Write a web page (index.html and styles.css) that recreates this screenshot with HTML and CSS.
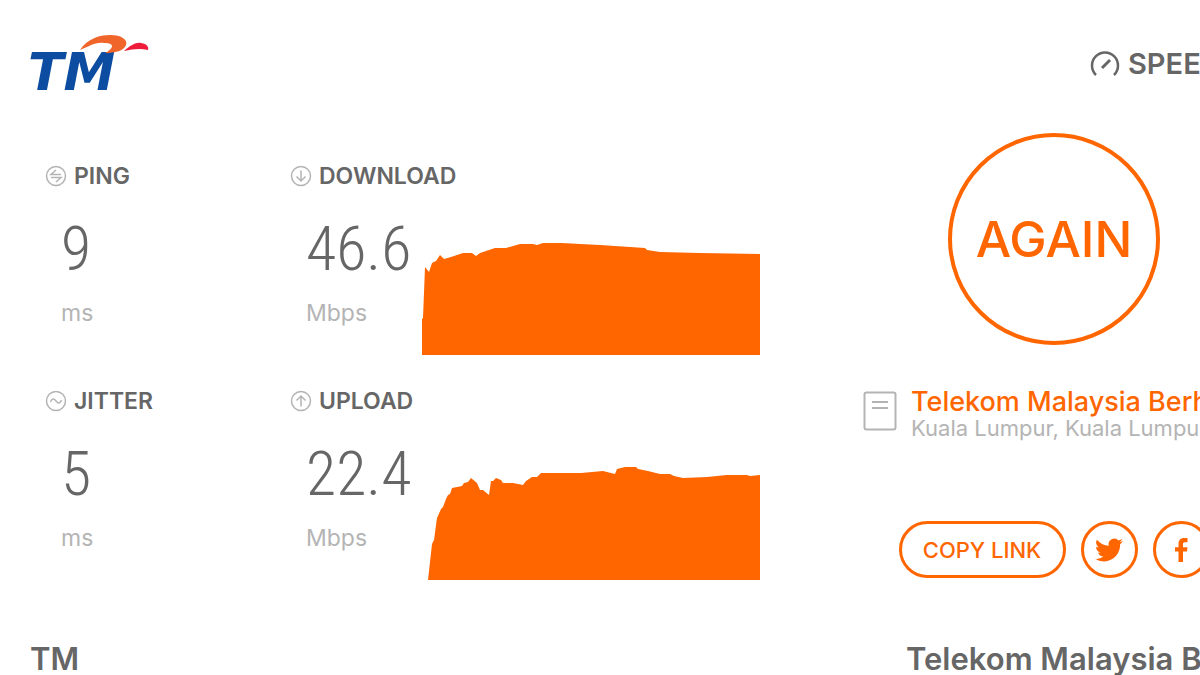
FILE: index.html
```html
<!DOCTYPE html>
<html lang="en">
<head>
    <meta charset="UTF-8">
    <meta name="viewport" content="width=device-width, initial-scale=1.0">
    <title>Speedtest - TM</title>
    <link rel="stylesheet" href="styles.css">
</head>
<body>
    <div class="page">
        <header class="header">
            <svg class="logo" viewBox="0 0 120 58" role="img" aria-label="TM">
                <text class="logo-text" x="-2" y="57">TM</text>
                <path fill="#f0652a" d="M50 17 C57 6 69 2 80 2 C92 2 98 7 96 12 C94 18 85 20 75 20 C83 16 86 10 74 10 C64 9 59 14 50 17 Z"/>
                <path fill="#ee1c3a" d="M94 18 C101 12 106 9 111 10 C117 11 119 14 118 17 C110 15 103 16 94 18 Z"/>
            </svg>
            <div class="brand">
                <svg class="gauge" viewBox="0 0 30 28" aria-hidden="true">
                    <path d="M6 25 A13 13 0 1 1 24 25"/>
                    <path class="needle" d="M12 18 L20 10"/>
                </svg>
                <span>SPEEDTEST</span>
            </div>
        </header>

        <main class="panel">
            <section class="metric">
                <h2 class="label">
                    <svg class="icon" viewBox="0 0 22 22" aria-hidden="true">
                        <circle cx="11" cy="11" r="9.500"/>
                        <path d="M16 9.500 H6 L11 5 M6 12.500 H16 L11 17"/>
                    </svg>
                    PING
                </h2>
                <div class="reading">
                    <div class="value">9</div>
                    <div class="unit">ms</div>
                </div>
            </section>

            <section class="metric">
                <h2 class="label">
                    <svg class="icon" viewBox="0 0 22 22" aria-hidden="true">
                        <circle cx="11" cy="11" r="9.500"/>
                        <path d="M11 5.500 V16 M6.500 11.500 L11 16 L15.500 11.500"/>
                    </svg>
                    DOWNLOAD
                </h2>
                <div class="graph-row">
                    <div class="reading">
                        <div class="value">46.6</div>
                        <div class="unit">Mbps</div>
                    </div>
                    <svg class="chart" viewBox="0 0 338 114" preserveAspectRatio="none" aria-hidden="true">
                        <polygon points="0,114 0,78 1,77 3,26 7,31 10,22 14,20 18,14 22,18 29,16 41,12 50,12 54,15 58,12 73,7 84,7 98,3 111,3 115,4 121,2 140,2 158,3 178,4 208,6 223,7 225,9 238,11 278,12 338,13 338,114"/>
                    </svg>
                </div>
            </section>

            <section class="metric jitter">
                <h2 class="label">
                    <svg class="icon" viewBox="0 0 22 22" aria-hidden="true">
                        <circle cx="11" cy="11" r="9.500"/>
                        <path d="M5.500 12 C7 8 9 8.500 11 11 S15 14 16.500 10"/>
                    </svg>
                    JITTER
                </h2>
                <div class="reading">
                    <div class="value">5</div>
                    <div class="unit">ms</div>
                </div>
            </section>

            <section class="metric upload">
                <h2 class="label">
                    <svg class="icon" viewBox="0 0 22 22" aria-hidden="true">
                        <circle cx="11" cy="11" r="9.500"/>
                        <path d="M11 16.500 V6 M6.500 10.500 L11 6 L15.500 10.500"/>
                    </svg>
                    UPLOAD
                </h2>
                <div class="graph-row">
                    <div class="reading">
                        <div class="value">22.4</div>
                        <div class="unit">Mbps</div>
                    </div>
                    <svg class="chart" viewBox="0 0 338 114" preserveAspectRatio="none" aria-hidden="true">
                        <polygon points="6,114 10,78 12,74 15,52 19,43 21,41 24,33 26,29 28,28 30,22 40,20 42,17 46,16 49,12 55,17 58,24 61,24 67,29 69,15 71,15 74,12 79,14 81,17 91,17 101,19 104,15 110,11 115,11 119,7 159,7 181,5 193,8 195,3 203,1 214,1 216,3 226,5 238,8 248,8 252,10 261,12 285,11 305,9 325,9 328,10 338,9 338,114"/>
                    </svg>
                </div>
            </section>

            <aside class="side">
                <button class="again" type="button">AGAIN</button>

                <div class="server">
                    <svg class="server-icon" viewBox="0 0 34 40" aria-hidden="true">
                        <rect x="1.500" y="1.500" width="31" height="37" rx="2"/>
                        <path d="M9 11 H25 M9 17 H25"/>
                    </svg>
                    <div>
                        <a class="server-name" href="#">Telekom Malaysia Berhad</a>
                        <div class="server-place">Kuala Lumpur, Kuala Lumpur</div>
                    </div>
                </div>

                <div class="share">
                    <button class="copy" type="button">COPY LINK</button>
                    <button class="round" type="button" aria-label="Twitter">
                        <svg width="28" height="28" viewBox="0 0 24 24" aria-hidden="true">
                            <path d="M23.950 4.570a10 10 0 0 1-2.820.770 4.960 4.960 0 0 0 2.160-2.720c-.950.550-2.010.950-3.120 1.180a4.920 4.920 0 0 0-8.390 4.480C7.690 8.090 4.070 6.130 1.640 3.160a4.930 4.930 0 0 0 1.520 6.570 4.900 4.900 0 0 1-2.230-.610v.060a4.920 4.920 0 0 0 3.950 4.830 5 5 0 0 1-2.210.080 4.940 4.940 0 0 0 4.600 3.420A9.870 9.870 0 0 1 0 19.540a14 14 0 0 0 7.550 2.210c9.050 0 14-7.500 14-13.980 0-.210 0-.420-.020-.630a9.900 9.900 0 0 0 2.460-2.550z"/>
                        </svg>
                    </button>
                    <button class="round" type="button" aria-label="Facebook">
                        <svg width="24" height="24" viewBox="0 0 24 24" aria-hidden="true">
                            <path d="M9.500 24V13.500H6V9.300h3.500V6C9.500 2.200 11.500 0 15 0h3.500v4.200H16c-1.600 0-2 .700-2 2v3.100h4.500l-.600 4.200H14V24z"/>
                        </svg>
                    </button>
                </div>
            </aside>
        </main>

        <footer class="footer">
            <div>TM</div>
            <div class="isp">Telekom Malaysia Berhad</div>
        </footer>
    </div>
</body>
</html>
```
FILE: styles.css
```css
body {
    margin: 0;
    background-color: #fff;
    color: #666;
    font-family: Inter, "Liberation Sans", sans-serif;
    overflow: hidden;
}

/* the result card is wider than small windows and runs off the right side */
.page {
    min-width: 1320px;
    white-space: nowrap;
}

.header {
    display: flex;
    justify-content: space-between;
    align-items: flex-start;
    padding: 33px 30px 0;
}

.logo {
    width: 120px;
    height: 58px;
    overflow: visible;
}

.logo-text {
    font-family: "DejaVu Sans", sans-serif;
    font-size: 52px;
    font-weight: bold;
    font-style: oblique;
    fill: #0d4da1;
}

.brand {
    display: flex;
    align-items: center;
    gap: 8px;
    width: 200px;
    padding-top: 14px;
    font-size: 29px;
    line-height: 34px;
    font-weight: 600;
}

.gauge {
    flex-shrink: 0;
    width: 30px;
    height: 28px;
    fill: none;
    stroke: #666;
    stroke-width: 2.5;
}

.needle {
    stroke-width: 3;
}

.panel {
    display: grid;
    grid-template-columns: 245px minmax(573px, 1fr) 382px;
    grid-template-rows: 225px 225px;
    padding: 72px 75px 0 45px;
}

.jitter {
    grid-column: 1;
    grid-row: 2;
}

.upload {
    grid-column: 2;
    grid-row: 2;
}

.label {
    display: flex;
    align-items: center;
    gap: 7px;
    margin: 0;
    font-size: 23px;
    line-height: 26px;
    font-weight: 600;
}

.icon {
    width: 22px;
    height: 22px;
    fill: none;
    stroke: #b4b4b4;
    stroke-width: 1.5;
}

.graph-row {
    display: flex;
    align-items: flex-end;
    padding-right: 103px;
}

.reading {
    width: 116px;
    height: 166px;
    padding-left: 16px;
}

.value {
    padding-top: 24px;
    font-family: "Roboto Condensed", Roboto, sans-serif;
    font-size: 62px;
    font-weight: 300;
    line-height: 72px;
}

.unit {
    margin-top: 14px;
    color: #b4b4b4;
    font-size: 23px;
    line-height: 28px;
}

.chart {
    flex: 1;
    min-width: 0;
    height: 114px;
    fill: #ff6600;
}

.side {
    grid-column: 3;
    grid-row: 1 / span 2;
    display: flex;
    flex-direction: column;
    margin-top: -30px;
}

button {
    background: none;
    border: 3px solid #ff6600;
    color: #ff6600;
    font-family: inherit;
    cursor: pointer;
    padding: 0;
}

.again {
    align-self: center;
    width: 212px;
    height: 212px;
    border-width: 4px;
    border-radius: 50%;
    font-size: 50px;
    font-weight: 500;
}

.server {
    display: flex;
    align-items: center;
    gap: 14px;
    margin-top: 43px;
}

.server-icon {
    width: 34px;
    height: 40px;
    padding-bottom: 6px;
    fill: none;
    stroke: #b4b4b4;
    stroke-width: 2;
}

.server-name {
    display: block;
    color: #ff6600;
    font-size: 27px;
    font-weight: 500;
    line-height: 28px;
    text-decoration: none;
}

.server-place {
    color: #b4b4b4;
    font-size: 22px;
    line-height: 24px;
}

.share {
    display: flex;
    justify-content: center;
    gap: 15px;
    margin-top: 81px;
}

.copy {
    width: 167px;
    height: 57px;
    border-radius: 29px;
    font-size: 22px;
    font-weight: 500;
}

.round {
    display: flex;
    justify-content: center;
    align-items: center;
    width: 57px;
    height: 57px;
    border-radius: 50%;
}

.round svg {
    fill: #ff6600;
}

.footer {
    display: flex;
    justify-content: space-between;
    padding: 28px 30px 0;
    font-size: 31px;
    font-weight: 600;
    line-height: 36px;
}

.isp {
    width: 384px;
}
```
